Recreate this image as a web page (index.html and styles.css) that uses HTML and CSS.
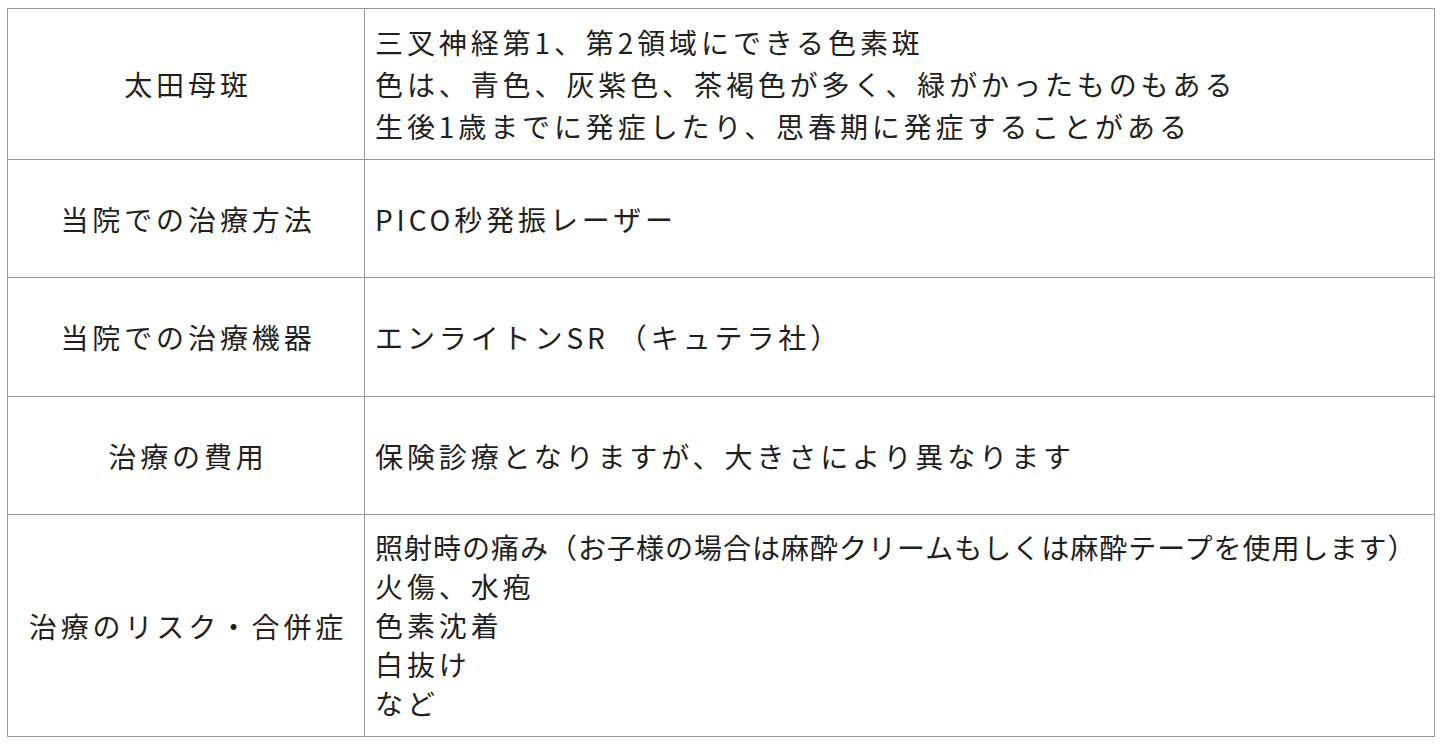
FILE: index.html
```html
<!DOCTYPE html>
<html lang="ja">
<head>
<meta charset="utf-8">
<title>太田母斑</title>
<link rel="stylesheet" href="styles.css">
</head>
<body>
<table class="info">
  <colgroup><col class="c-head"><col class="c-body"></colgroup>
  <tr class="r1">
    <th>太田母斑</th>
    <td class="wide">三叉神経第1、第2領域にできる色素斑<br>色は、青色、灰紫色、茶褐色が多く、緑がかったものもある<br>生後1歳までに発症したり、思春期に発症することがある</td>
  </tr>
  <tr class="r2">
    <th>当院での治療方法</th>
    <td>PICO秒発振レーザー</td>
  </tr>
  <tr class="r3">
    <th>当院での治療機器</th>
    <td>エンライトンSR （キュテラ社）</td>
  </tr>
  <tr class="r4">
    <th>治療の費用</th>
    <td>保険診療となりますが、大きさにより異なります</td>
  </tr>
  <tr class="r5">
    <th>治療のリスク・合併症</th>
    <td class="list"><span class="tight">照射時の痛み（お子様の場合は麻酔クリームもしくは麻酔テープを使用します）</span><br>火傷、水疱<br>色素沈着<br>白抜け<br>など</td>
  </tr>
</table>
</body>
</html>
```

FILE: styles.css
```css
html, body {
  margin: 0;
  padding: 0;
  background: #ffffff;
}
body {
  padding: 8px 6px 0 7px;
  font-family: "Noto Sans CJK JP", "Noto Sans", sans-serif;
  color: #1f1f1f;
}
.info {
  border-collapse: collapse;
  width: 1427px;
  table-layout: fixed;
}
.c-head { width: 357px; }
.c-body { width: 1070px; }
.info th, .info td {
  border: 1px solid #999999;
  font-size: 28px;
  font-weight: 400;
  letter-spacing: 3.9px;
  vertical-align: middle;
  padding: 0;
}
.info th {
  text-align: center;
  padding-left: 4px;
}
.info td {
  text-align: left;
  padding-left: 10px;
}
.r1 { height: 151px; }
.r2 { height: 118px; }
.r3 { height: 119px; }
.r4 { height: 118px; }
.r5 { height: 222px; }
.r1 td { line-height: 42px; }
.r5 td { line-height: 39px; }
.tight { letter-spacing: 1px; }
```
